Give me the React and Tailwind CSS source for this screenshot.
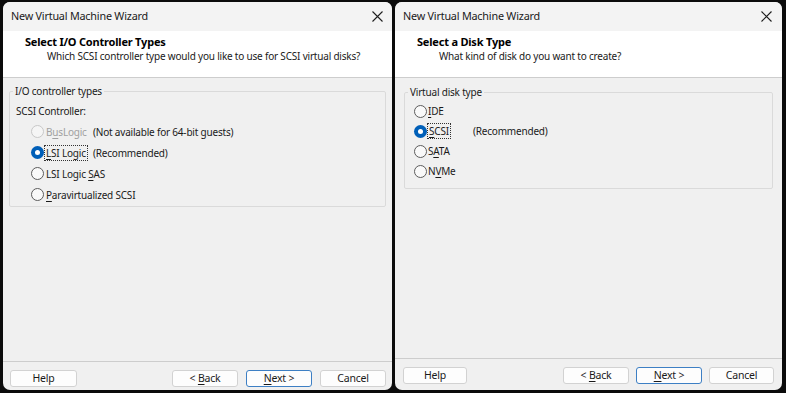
import React from "react";

function CloseX() {
  return (
    <svg width="11" height="11" viewBox="0 0 11 11" className="shrink-0">
      <path d="M0.5 0.5 L10.5 10.5 M10.5 0.5 L0.5 10.5" stroke="#1f1f1f" strokeWidth="1.1" fill="none" />
    </svg>
  );
}

function Radio({ checked, disabled }) {
  if (checked) {
    return (
      <span className="w-[13px] h-[13px] rounded-full bg-[#005fb8] flex items-center justify-center shrink-0">
        <span className="w-[5px] h-[5px] rounded-full bg-white" />
      </span>
    );
  }
  if (disabled) {
    return <span className="w-[13px] h-[13px] rounded-full border border-[#c8c8c8] bg-[#f5f5f5] shrink-0" />;
  }
  return <span className="w-[13px] h-[13px] rounded-full border border-[#5c5c5c] bg-[#f9f9f9] shrink-0" />;
}

function Btn({ children, primary, w }) {
  return (
    <div
      className={
        "h-[17px] rounded-[3px] flex items-center justify-center text-[10.5px] tracking-[-0.2px] leading-none text-[#1a1a1a] " +
        (primary ? "border border-[#3d7fc4] bg-[#fdfdfd] " : "border border-[#d2d2d2] bg-[#fdfdfd] ") +
        w
      }
    >
      <span className="whitespace-pre">{children}</span>
    </div>
  );
}

function U({ children }) {
  return <span className="underline underline-offset-[2px] decoration-[1px]">{children}</span>;
}

function LeftWindow() {
  return (
    <div className="w-[389px] h-[388px] bg-[#f0f0f0] rounded-[7px] flex flex-col overflow-hidden">
      <div className="h-[29px] bg-[#f3f3f3] flex items-center justify-between pl-[8px] pr-[9px] shrink-0">
        <span className="text-[10.8px] tracking-[-0.2px] text-[#1a1a1a]">New Virtual Machine Wizard</span>
        <CloseX />
      </div>
      <div className="h-[47px] bg-white border-b border-[#cdcdcd] pl-[22px] pt-[4px] shrink-0 leading-[14px]">
        <div className="font-bold text-[11px] tracking-[-0.2px] text-black">Select I/O Controller Types</div>
        <div className="pl-[22px] text-[10px] tracking-[-0.2px] text-[#1a1a1a]">
          Which SCSI controller type would you like to use for SCSI virtual disks?
        </div>
      </div>
      <div className="flex-1 px-[6px] pt-[6px]">
        <fieldset className="border border-[#dadada] rounded-[2px] pl-[6px] pr-[6px] pt-[2px] pb-[1px] text-[10px] tracking-[-0.2px] text-[#1a1a1a] leading-[14px]">
          <legend className="px-[2px] ml-[-3px]">I/O controller types</legend>
          <div className="h-[21px] flex items-center">SCSI Controller:</div>
          <div className="h-[21px] flex items-center pl-[15px]">
            <Radio disabled />
            <span className="w-[49px] pl-[2px] text-[#a0a0a0]">B<U>u</U>sLogic</span>
            <span>(Not available for 64-bit guests)</span>
          </div>
          <div className="h-[21px] flex items-center pl-[15px]">
            <Radio checked />
            <span className="w-[49px] pl-[0px]">
              <span className="border border-dotted border-[#333] px-[1px]"><U>L</U>SI Logic</span>
            </span>
            <span>(Recommended)</span>
          </div>
          <div className="h-[21px] flex items-center pl-[15px]">
            <Radio />
            <span className="pl-[2px]">LSI Logic <U>S</U>AS</span>
          </div>
          <div className="h-[21px] flex items-center pl-[15px]">
            <Radio />
            <span className="pl-[2px]"><U>P</U>aravirtualized SCSI</span>
          </div>
        </fieldset>
      </div>
      <div className="h-[29px] border-t border-[#cdcdcd] flex items-start justify-between pt-[8px] pl-[7px] pr-[6px] shrink-0">
        <Btn w="w-[67px]">Help</Btn>
        <div className="flex gap-[8px]">
          <Btn w="w-[66px]">&lt; <U>B</U>ack</Btn>
          <Btn w="w-[66px]" primary><U>N</U>ext &gt;</Btn>
          <Btn w="w-[66px]">Cancel</Btn>
        </div>
      </div>
    </div>
  );
}

function RightWindow() {
  return (
    <div className="w-[387px] h-[388px] bg-[#f0f0f0] rounded-[7px] flex flex-col overflow-hidden">
      <div className="h-[29px] bg-[#f3f3f3] flex items-center justify-between pl-[8px] pr-[10px] shrink-0">
        <span className="text-[10.8px] tracking-[-0.2px] text-[#1a1a1a]">New Virtual Machine Wizard</span>
        <CloseX />
      </div>
      <div className="h-[47px] bg-white border-b border-[#cdcdcd] pl-[22px] pt-[4px] shrink-0 leading-[14px]">
        <div className="font-bold text-[11px] tracking-[-0.2px] text-black">Select a Disk Type</div>
        <div className="pl-[22px] text-[10px] tracking-[-0.2px] text-[#1a1a1a]">What kind of disk do you want to create?</div>
      </div>
      <div className="flex-1 px-[9px] pt-[7px]">
        <fieldset className="border border-[#dadada] rounded-[2px] pl-[9px] pr-[6px] pt-[2px] pb-[7px] text-[10px] tracking-[-0.2px] text-[#1a1a1a] leading-[14px]">
          <legend className="px-[2px] ml-[-6px]">Virtual disk type</legend>
          <div className="h-[20px] flex items-center">
            <Radio />
            <span className="pl-[1px]"><U>I</U>DE</span>
          </div>
          <div className="h-[20px] flex items-center">
            <Radio checked />
            <span className="w-[46px] pl-[0px]">
              <span className="border border-dotted border-[#333] px-[1px]"><U>S</U>CSI</span>
            </span>
            <span>(Recommended)</span>
          </div>
          <div className="h-[20px] flex items-center">
            <Radio />
            <span className="pl-[1px]">S<U>A</U>TA</span>
          </div>
          <div className="h-[20px] flex items-center">
            <Radio />
            <span className="pl-[1px]">N<U>V</U>Me</span>
          </div>
        </fieldset>
      </div>
      <div className="h-[32px] border-t border-[#cdcdcd] flex items-start justify-between pt-[8px] pl-[8px] pr-[8px] shrink-0">
        <Btn w="w-[64px]">Help</Btn>
        <div className="flex gap-[7px]">
          <Btn w="w-[66px]">&lt; <U>B</U>ack</Btn>
          <Btn w="w-[66px]" primary><U>N</U>ext &gt;</Btn>
          <Btn w="w-[65px]">Cancel</Btn>
        </div>
      </div>
    </div>
  );
}

export default function App() {
  return (
    <div className="w-[786px] h-[393px] bg-[#0b0b0b] flex gap-[3px] pl-[3px] pt-[2px] font-['Noto_Sans',sans-serif] overflow-hidden">
      <LeftWindow />
      <RightWindow />
    </div>
  );
}
